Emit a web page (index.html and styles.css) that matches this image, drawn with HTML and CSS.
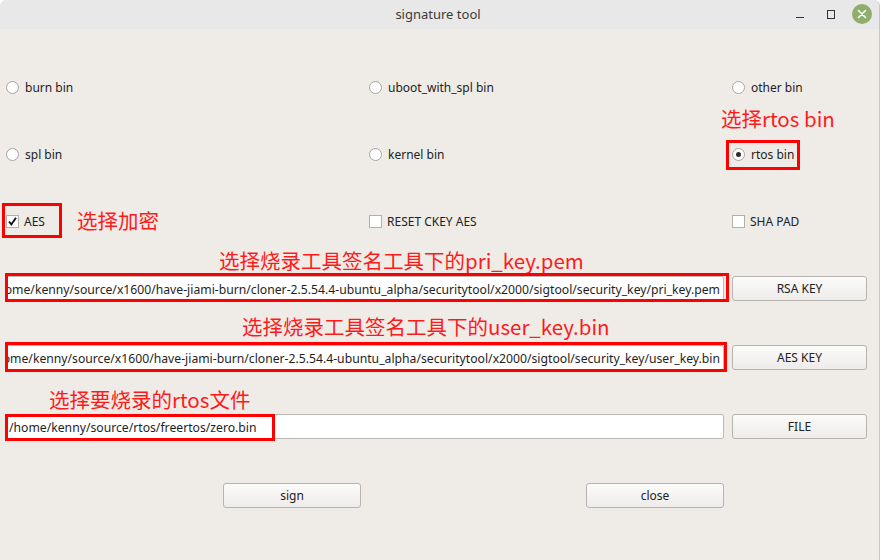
FILE: index.html
```html
<!DOCTYPE html>
<html>
<head>
<meta charset="utf-8">
<title>signature tool</title>
<link rel="stylesheet" href="styles.css">
</head>
<body>
<div class="window">
  <div class="titlebar">
    <span class="title">signature tool</span>
    <div class="controls">
      <span class="ctl min"></span>
      <span class="ctl max"></span>
      <span class="ctl close">
        <svg width="20" height="20" viewBox="0 0 20 20"><path d="M6.5 6.5L13.5 13.5M13.5 6.5L6.5 13.5" stroke="#fff" stroke-width="1.6" stroke-linecap="round"/></svg>
      </span>
    </div>
  </div>
  <div class="content">
    <div class="options">
      <label class="opt"><span class="radio"></span><span>burn bin</span></label>
      <label class="opt"><span class="radio"></span><span>uboot_with_spl bin</span></label>
      <label class="opt"><span class="radio"></span><span>other bin</span></label>
      <label class="opt"><span class="radio"></span><span>spl bin</span></label>
      <label class="opt"><span class="radio"></span><span>kernel bin</span></label>
      <label class="opt"><span class="radio checked"></span><span>rtos bin</span></label>
      <label class="opt chk"><span class="box"><svg width="11" height="11" viewBox="0 0 11 11"><path d="M2 5.5L4.3 8.5L9 1.8" fill="none" stroke="#111" stroke-width="1.9"/></svg></span><span>AES</span></label>
      <label class="opt chk"><span class="box"></span><span>RESET CKEY AES</span></label>
      <label class="opt chk"><span class="box"></span><span>SHA PAD</span></label>
    </div>
    <div class="fields">
      <div class="field-row">
        <div class="input"><span class="val">/home/kenny/source/x1600/have-jiami-burn/cloner-2.5.54.4-ubuntu_alpha/securitytool/x2000/sigtool/security_key/pri_key.pem</span></div>
        <button class="btn">RSA KEY</button>
      </div>
      <div class="field-row">
        <div class="input"><span class="val">/home/kenny/source/x1600/have-jiami-burn/cloner-2.5.54.4-ubuntu_alpha/securitytool/x2000/sigtool/security_key/user_key.bin</span></div>
        <button class="btn">AES KEY</button>
      </div>
      <div class="field-row">
        <div class="input start"><span class="val">/home/kenny/source/rtos/freertos/zero.bin</span></div>
        <button class="btn">FILE</button>
      </div>
    </div>
    <div class="actions">
      <button class="btn wide">sign</button>
      <button class="btn wide">close</button>
    </div>
  </div>

  <div class="note n-rtos">选择rtos bin</div>
  <div class="note n-aes">选择加密</div>
  <div class="note n-pri">选择烧录工具签名工具下的pri_key.pem</div>
  <div class="note n-user">选择烧录工具签名工具下的user_key.bin</div>
  <div class="note n-file">选择要烧录的rtos文件</div>

  <div class="mark m-rtos"></div>
  <div class="mark m-aes"></div>
  <div class="mark m-pri"></div>
  <div class="mark m-user"></div>
  <div class="mark m-file"></div>
</div>
</body>
</html>
```
FILE: styles.css
```css
html, body {
  margin: 0;
  padding: 0;
  background: #ffffff;
}
body {
  font-family: "Noto Sans", "DejaVu Sans", sans-serif;
  font-size: 12px;
  color: #222;
}
.window {
  position: relative;
  width: 880px;
  height: 560px;
  background: #efece8;
  border-right: 1px solid #c8c6c2;
  box-sizing: border-box;
  border-top-left-radius: 6px;
  border-top-right-radius: 6px;
  overflow: hidden;
}
.titlebar {
  height: 29px;
  background: #e8e8e8;
  display: flex;
  align-items: center;
  justify-content: center;
  position: relative;
}
.title {
  font-size: 13px;
  color: #3b3b3b;
  margin-left: -3px;
  margin-top: -2px;
}
.controls {
  position: absolute;
  right: 7px;
  top: 4px;
  display: flex;
  align-items: center;
  gap: 11px;
}
.ctl {
  width: 20px;
  height: 20px;
  display: flex;
  align-items: center;
  justify-content: center;
}
.ctl.min::before {
  content: "";
  width: 8px;
  height: 1px;
  background: #333;
  margin-top: 7px;
}
.ctl.max::before {
  content: "";
  width: 6px;
  height: 7px;
  border: 1px solid #333;
}
.ctl.close {
  border-radius: 50%;
  background: #8fae6b;
}
.content {
  padding-top: 48px;
}
.options {
  display: grid;
  grid-template-columns: 363px 363px 1fr;
  row-gap: 47px;
  padding-left: 6px;
}
.opt {
  display: flex;
  align-items: center;
  height: 20px;
  gap: 6px;
  color: #222;
}
.opt.chk {
  gap: 5px;
}
.radio {
  width: 13px;
  height: 13px;
  border-radius: 50%;
  border: 1px solid #a6a4a0;
  background: #fff;
  box-sizing: border-box;
  display: flex;
  align-items: center;
  justify-content: center;
}
.radio.checked::after {
  content: "";
  width: 5px;
  height: 5px;
  border-radius: 50%;
  background: #2e2e2e;
}
.box {
  width: 13px;
  height: 13px;
  border: 1px solid #b2b0ac;
  background: #fff;
  box-sizing: border-box;
  display: flex;
  align-items: center;
  justify-content: center;
}
.fields {
  margin-top: 45px;
  padding-left: 5px;
  display: flex;
  flex-direction: column;
  gap: 44px;
}
.field-row {
  display: flex;
  gap: 8px;
  height: 25px;
}
.input {
  width: 719px;
  height: 25px;
  box-sizing: border-box;
  background: #fff;
  border: 1px solid #bcb9b4;
  border-radius: 2px;
  display: flex;
  align-items: center;
  justify-content: flex-end;
  overflow: hidden;
  white-space: nowrap;
  padding: 0 3px;
  font-size: 12.2px;
}
.input.start {
  justify-content: flex-start;
}
.val {
  flex: none;
  color: #1e1e1e;
  padding-top: 1px;
}
.btn {
  width: 135px;
  height: 25px;
  box-sizing: border-box;
  border: 1px solid #b7b4b0;
  border-radius: 3px;
  background: linear-gradient(#fbfbfa, #eeecea);
  font-family: "Noto Sans", "DejaVu Sans", sans-serif;
  font-size: 12px;
  color: #222;
  padding: 0;
}
.actions {
  margin-top: 44px;
  display: flex;
  padding-left: 223px;
  gap: 225px;
}
.btn.wide {
  width: 138px;
}
.note {
  position: absolute;
  color: #ff1a1a;
  font-family: "Noto Sans CJK SC", "Noto Sans", sans-serif;
  font-size: 20.5px;
  line-height: 24px;
  white-space: nowrap;
}
.n-rtos { left: 721px; top: 106px; }
.n-aes { left: 77px; top: 208px; }
.n-pri { left: 219px; top: 248px; }
.n-user { left: 242px; top: 314px; }
.n-file { left: 49px; top: 387px; }
.mark {
  position: absolute;
  border: 3px solid #ff0000;
  box-sizing: border-box;
}
.m-rtos { left: 726px; top: 140px; width: 74px; height: 30px; }
.m-aes { left: 2px; top: 203px; width: 60px; height: 35px; }
.m-pri { left: 5px; top: 273px; width: 724px; height: 29px; }
.m-user { left: 5px; top: 342px; width: 722px; height: 30px; }
.m-file { left: 5px; top: 414px; width: 270px; height: 27px; }
```
